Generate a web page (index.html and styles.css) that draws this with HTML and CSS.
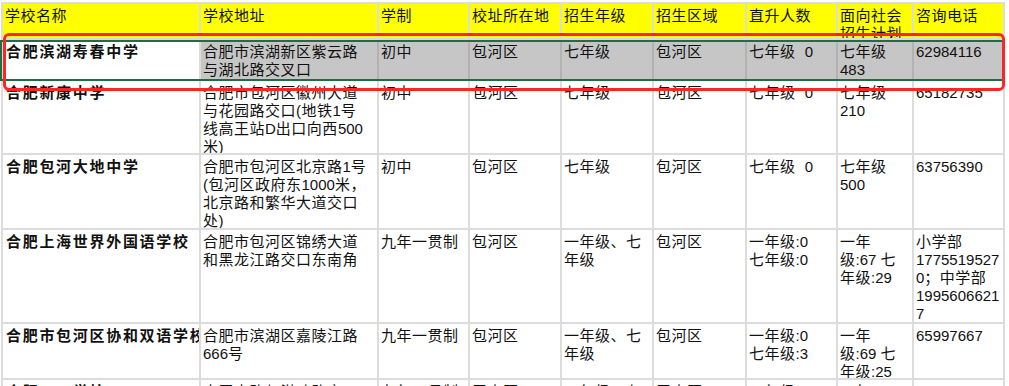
FILE: index.html
```html
<!DOCTYPE html>
<html lang="zh-CN">
  <head>
    <meta charset="UTF-8" />
    <meta name="viewport" content="width=device-width, initial-scale=1.0" />
    <title>合肥市民办学校招生计划</title>
    <link rel="stylesheet" href="styles.css">
  </head>
  <body>
    <div class="sheet">
      <div class="grid">
        <!-- header -->
        <div class="cell head">学校名称</div>
        <div class="cell head">学校地址</div>
        <div class="cell head">学制</div>
        <div class="cell head">校址所在地</div>
        <div class="cell head">招生年级</div>
        <div class="cell head">招生区域</div>
        <div class="cell head">直升人数</div>
        <div class="cell head">面向社会<br>招生计划</div>
        <div class="cell head">咨询电话</div>

        <!-- row 1 (selected) -->
        <div class="cell name">合肥滨湖寿春中学</div>
        <div class="cell sel first">合肥市滨湖新区紫云路<br>与湖北路交叉口</div>
        <div class="cell sel">初中</div>
        <div class="cell sel">包河区</div>
        <div class="cell sel">七年级</div>
        <div class="cell sel">包河区</div>
        <div class="cell sel">七年级&nbsp; <span class="n">0</span></div>
        <div class="cell sel">七年级<br><span class="n">483</span></div>
        <div class="cell sel"><span class="n">62984116</span></div>

        <!-- row 2 -->
        <div class="cell name">合肥新康中学</div>
        <div class="cell">合肥市包河区徽州大道<br>与花园路交口(地铁<span class="n">1</span>号<br>线高王站<span class="n">D</span>出口向西<span class="n">500</span><br>米)</div>
        <div class="cell">初中</div>
        <div class="cell">包河区</div>
        <div class="cell">七年级</div>
        <div class="cell">包河区</div>
        <div class="cell">七年级&nbsp; <span class="n">0</span></div>
        <div class="cell">七年级<br><span class="n">210</span></div>
        <div class="cell"><span class="n">65182735</span></div>

        <!-- row 3 -->
        <div class="cell name">合肥包河大地中学</div>
        <div class="cell">合肥市包河区北京路<span class="n">1</span>号<br>(包河区政府东<span class="n">1000</span>米，<br>北京路和繁华大道交口<br>处)</div>
        <div class="cell">初中</div>
        <div class="cell">包河区</div>
        <div class="cell">七年级</div>
        <div class="cell">包河区</div>
        <div class="cell">七年级&nbsp; <span class="n">0</span></div>
        <div class="cell">七年级<br><span class="n">500</span></div>
        <div class="cell"><span class="n">63756390</span></div>

        <!-- row 4 -->
        <div class="cell name">合肥上海世界外国语学校</div>
        <div class="cell">合肥市包河区锦绣大道<br>和黑龙江路交口东南角</div>
        <div class="cell">九年一贯制</div>
        <div class="cell">包河区</div>
        <div class="cell">一年级、七<br>年级</div>
        <div class="cell">包河区</div>
        <div class="cell">一年级<span class="n">:0</span><br>七年级<span class="n">:0</span></div>
        <div class="cell">一年<br>级<span class="n">:67 </span>七<br>年级<span class="n">:29</span></div>
        <div class="cell">小学部<br><span class="n">1775519527</span><br><span class="n">0</span>；中学部<br><span class="n">1995606621</span><br><span class="n">7</span></div>

        <!-- row 5 -->
        <div class="cell name">合肥市包河区协和双语学校</div>
        <div class="cell">合肥市滨湖区嘉陵江路<br><span class="n">666</span>号</div>
        <div class="cell">九年一贯制</div>
        <div class="cell">包河区</div>
        <div class="cell">一年级、七<br>年级</div>
        <div class="cell">包河区</div>
        <div class="cell">一年级<span class="n">:0</span><br>七年级<span class="n">:3</span></div>
        <div class="cell">一年<br>级<span class="n">:69 </span>七<br>年级<span class="n">:25</span></div>
        <div class="cell"><span class="n">65997667</span></div>

        <!-- row 6 (cut off) -->
        <div class="cell name">合肥八一学校</div>
        <div class="cell">大蜀山路与潜鸣路交口</div>
        <div class="cell">九年一贯制</div>
        <div class="cell">蜀山区</div>
        <div class="cell">一年级、七</div>
        <div class="cell">蜀山区</div>
        <div class="cell">一年级<span class="n">:0</span></div>
        <div class="cell">一年</div>
        <div class="cell"><span class="n">18888888</span></div>
      </div>

      <div class="selection"></div>
      <div class="mark"></div>
    </div>
  </body>
</html>
```

FILE: styles.css
```css
html,
body {
  margin: 0;
  background: #fff;
  overflow: hidden;
}
.sheet {
  position: relative;
  height: 386px;
  overflow: hidden;
}
.grid {
  display: grid;
  grid-template-columns: 196px 176px 89px 90px 90px 91px 89px 74px 89px;
  grid-template-rows: 34px 39px 72px 73px 92px 54px 40px;
  gap: 2px;
  padding: 2px;
  margin: 2px 0 0 1px;
  width: max-content;
  background: #dcdcdc;
}
.cell {
  background: #fff;
  color: #111;
  font-family: "Liberation Sans", "Noto Sans CJK SC", sans-serif;
  font-size: 15px;
  line-height: 18px;
  letter-spacing: 0.5px;
  padding: 3px 2px 0;
  white-space: nowrap;
  overflow: hidden;
}
.head {
  background: #ffff00;
}
.name {
  font-weight: bold;
  letter-spacing: 1.7px;
  padding-left: 3px;
}
.sel {
  background: #c6c6c6;
  box-shadow: -2px 0 0 #b2b2b2;
}
.sel.first {
  box-shadow: none;
}
.n {
  letter-spacing: 0;
}
.selection {
  position: absolute;
  left: 0;
  top: 40px;
  width: 1004px;
  height: 41px;
  box-sizing: border-box;
  border: 2px solid #1f6e43;
}
.mark {
  position: absolute;
  left: 3px;
  top: 33px;
  width: 1002px;
  height: 58px;
  box-sizing: border-box;
  border: 3px solid #fb2727;
  border-radius: 6px;
}
```
